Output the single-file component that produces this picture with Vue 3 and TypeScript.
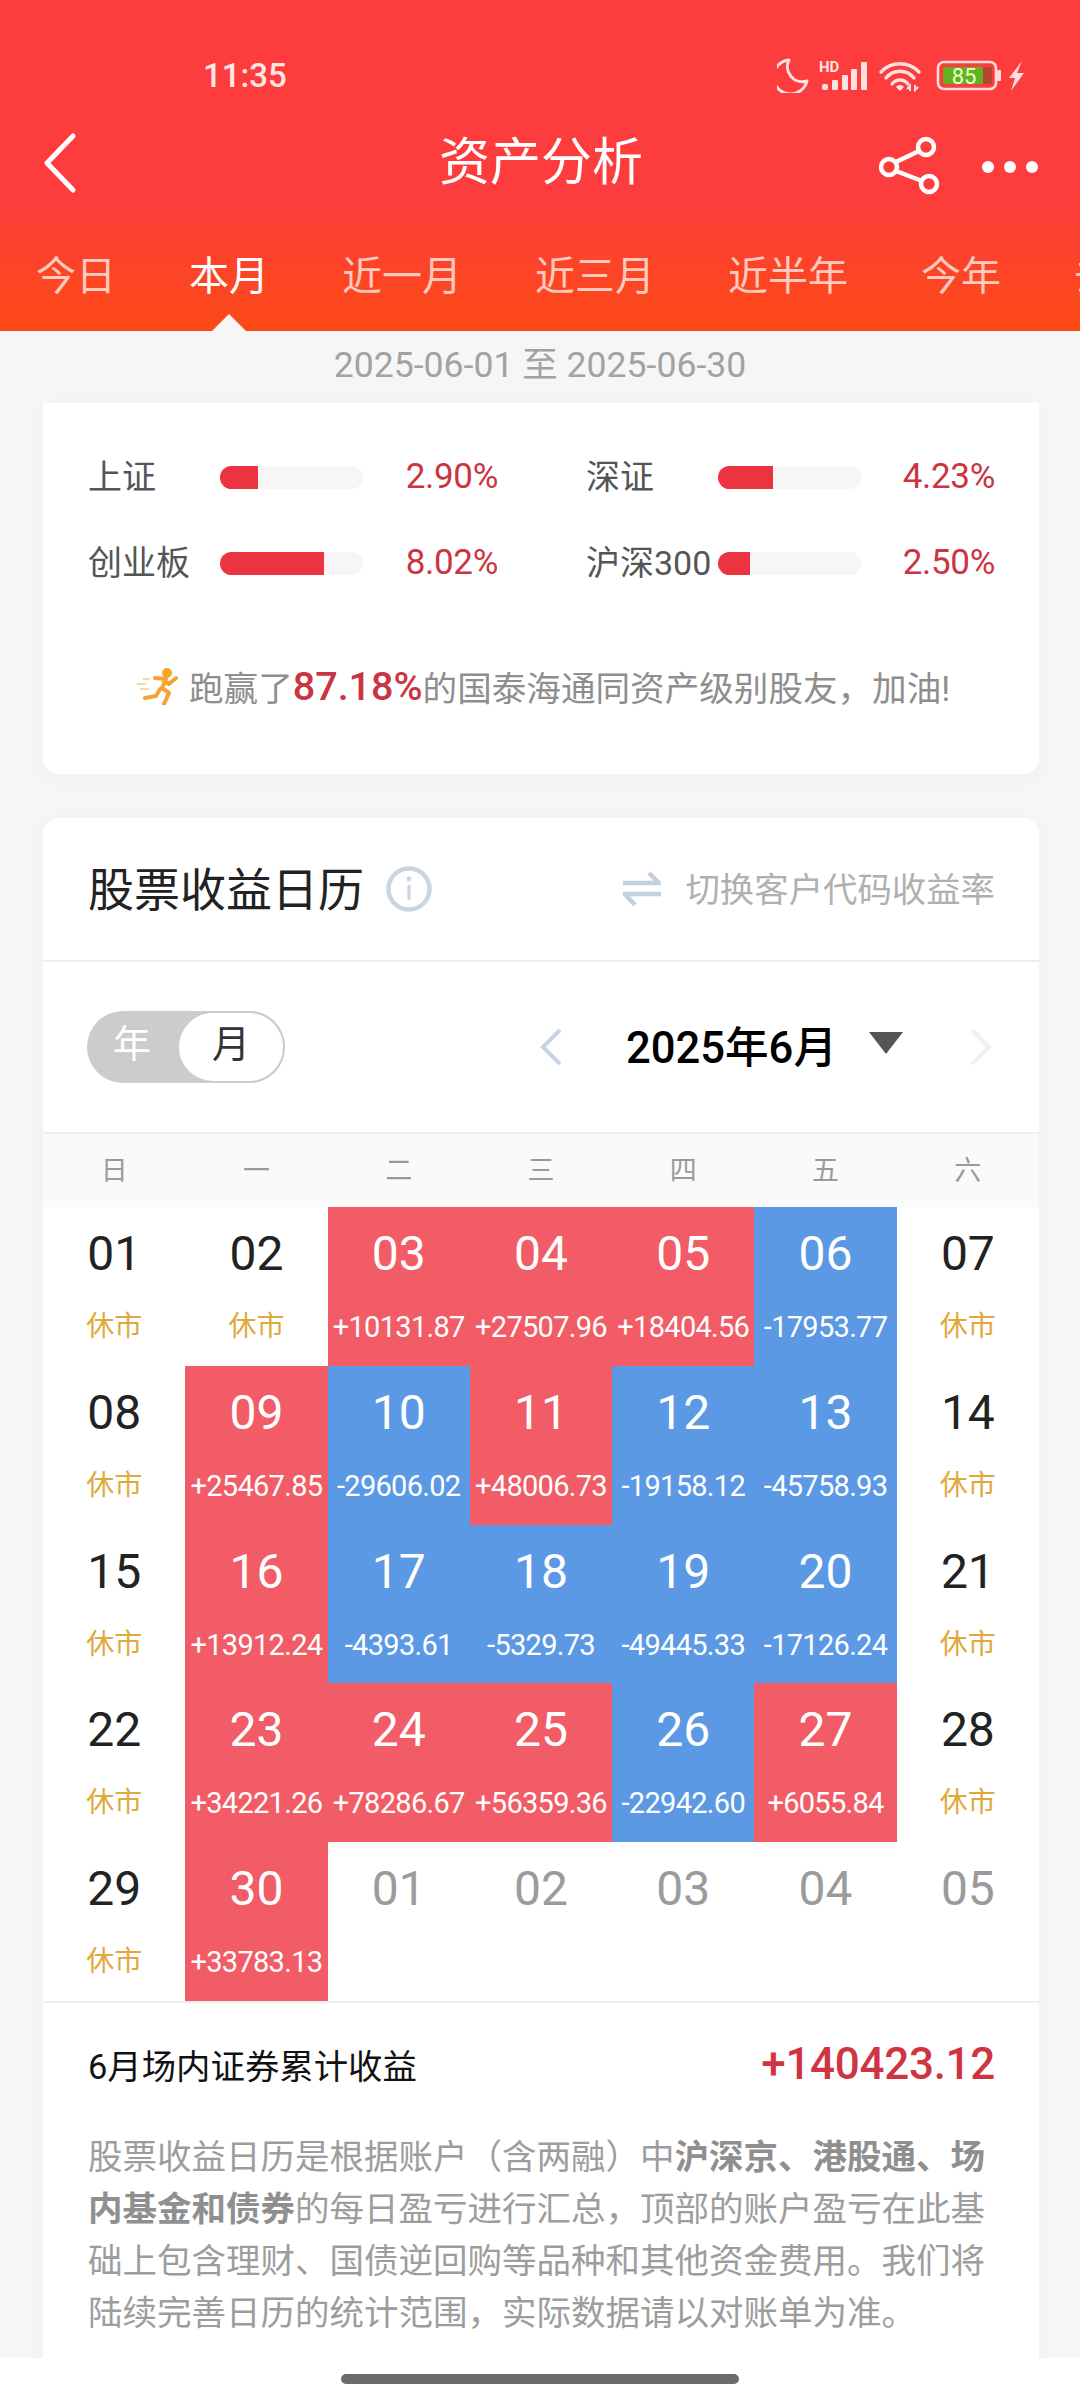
<template>
  <div class="page">
    <header class="top">
      <div class="status">
        <span class="time">11:35</span>
        <svg class="status-icons" viewBox="777 56 247 36" width="247" height="36">
          <path d="M789 59A17 17 0 1 0 807 80A15 15 0 0 1 789 59Z" fill="none" stroke="#ffe0e0" stroke-width="3" stroke-linejoin="round" />
          <text x="819" y="71" class="hd">HD</text>
          <g fill="#ffe0e0">
            <rect x="822" y="83" width="6" height="6" rx="2" />
            <rect x="832" y="79" width="6" height="10" rx="1" />
            <rect x="842" y="74" width="6" height="15" rx="1" />
            <rect x="851" y="68" width="6" height="21" rx="1" />
            <rect x="861" y="61" width="6" height="28" rx="1" />
          </g>
          <g fill="none" stroke="#ffe0e0" stroke-width="3.4" stroke-linecap="round">
            <path d="M881 71A26 26 0 0 1 919 71" />
            <path d="M886 77A18 18 0 0 1 914 77" />
            <path d="M892 83A10 10 0 0 1 908 83" />
          </g>
          <path d="M896 86L900 90L904 86A5 5 0 0 0 896 86Z" fill="#ffe0e0" />
          <path d="M910 90V85L907 88M915 84V89L918 86" fill="none" stroke="#ffe0e0" stroke-width="2" />
          <rect x="938" y="61" width="58" height="27" rx="6" fill="none" stroke="#ffdcdc" stroke-width="2.6" />
          <rect x="943" y="66" width="49" height="17" rx="1" fill="#b5452e" />
          <rect x="943" y="66" width="40" height="17" rx="1" fill="#62b21f" />
          <text x="964" y="83" class="batt">85</text>
          <rect x="997" y="69" width="4" height="11" rx="1" fill="#ffdcdc" />
          <path d="M1022 60L1009 77H1015L1011 90L1024 72H1017Z" fill="#ffdcdc" />
        </svg>
      </div>
      <div class="nav">
        <svg class="back" viewBox="0 0 36 62" width="36" height="62">
          <path d="M32 4L6 31L32 58" fill="none" stroke="#fff" stroke-width="5" stroke-linecap="round" stroke-linejoin="round" />
        </svg>
        <h1 class="title">资产分析</h1>
        <svg class="share" viewBox="878 135 62 62" width="62" height="62">
          <g fill="none" stroke="#fff" stroke-width="4.5">
            <circle cx="926" cy="147" r="8" />
            <circle cx="889" cy="167" r="8" />
            <circle cx="929" cy="184" r="8" />
            <path d="M896 162L919 151M896 171L922 181" />
          </g>
        </svg>
        <div class="dots"><i></i><i></i><i></i></div>
      </div>
      <div class="tabs">
        <span v-for="(t, i) in tabs" :key="t" class="tab" :class="{ active: i === 1 }">{{ t }}</span>
      </div>
    </header>

    <div class="range">2025-06-01 至 2025-06-30</div>

    <section class="card compare">
      <div class="stats">
        <div v-for="s in stats" :key="s.name" class="stat">
          <span class="stat-name">{{ s.name }}</span>
          <span class="bar"><span class="bar-fill" :style="{ width: s.fill + 'px' }"></span></span>
          <span class="stat-val">{{ s.value }}</span>
        </div>
      </div>
      <p class="beat">
        <svg class="runner" viewBox="0 0 42 38" width="42" height="38">
          <circle cx="31" cy="6" r="5" fill="#f5a623" />
          <path d="M19 11L30 12L26 21L33 26L28 37M27 13L33 17L40 11M24 22L20 29L9 31" fill="none" stroke="#f3a433" stroke-width="4" stroke-linejoin="round" stroke-linecap="round" />
          <path d="M1 17H10M4 22H13M7 12H14" fill="none" stroke="#f2c98c" stroke-width="1.6" />
        </svg>
        <span>跑赢了</span><b>87.18%</b><span>的国泰海通同资产级别股友，加油!</span>
      </p>
    </section>

    <section class="card calendar">
      <div class="cal-head">
        <div class="cal-title">
          <h2>股票收益日历</h2>
          <svg viewBox="0 0 46 46" width="46" height="46">
            <circle cx="23" cy="23" r="20.5" fill="none" stroke="#c8d6e4" stroke-width="4.5" />
            <circle cx="23" cy="13" r="2.4" fill="#c8d6e4" />
            <rect x="21.4" y="19" width="3.2" height="15" fill="#c8d6e4" />
          </svg>
        </div>
        <div class="switch">
          <svg viewBox="0 0 38 36" width="38" height="36">
            <path d="M0 12H36L26 2" fill="none" stroke="#c3d1de" stroke-width="4.5" />
            <path d="M38 23H2L12 34" fill="none" stroke="#c3d1de" stroke-width="4.5" />
          </svg>
          <span>切换客户代码收益率</span>
        </div>
      </div>

      <div class="controls">
        <div class="toggle">
          <span class="toggle-off">年</span>
          <span class="toggle-on">月</span>
        </div>
        <div class="month">
          <svg viewBox="0 0 22 38" width="22" height="38"><path d="M20 2L3 19L20 36" fill="none" stroke="#c6d4e4" stroke-width="4" /></svg>
          <span class="month-text">2025年6月</span>
          <span class="caret"></span>
          <svg viewBox="0 0 22 38" width="22" height="38"><path d="M2 2L19 19L2 36" fill="none" stroke="#eef1f5" stroke-width="4" /></svg>
        </div>
      </div>

      <div class="week">
        <span v-for="w in weekdays" :key="w">{{ w }}</span>
      </div>

      <div class="days">
        <div v-for="(d, i) in days" :key="i" class="day" :class="d.kind">
          <span class="num">{{ d.num }}</span>
          <span class="sub">{{ d.sub }}</span>
        </div>
      </div>

      <div class="summary">
        <span class="summary-name">6月场内证券累计收益</span>
        <span class="summary-val">+140423.12</span>
      </div>
      <p class="note">
        股票收益日历是根据账户（含两融）中<strong>沪深京、港股通、场内基金和债券</strong>的每日盈亏进行汇总，顶部的账户盈亏在此基础上包含理财、国债逆回购等品种和其他资金费用。我们将陆续完善日历的统计范围，实际数据请以对账单为准。
      </p>
    </section>

    <div class="home"><i></i></div>
  </div>
</template>

<script setup lang="ts">
type Day = { num: string; sub: string; kind: string };

const tabs = ['今日', '本月', '近一月', '近三月', '近半年', '今年', '去年'];
const weekdays = ['日', '一', '二', '三', '四', '五', '六'];

const stats = [
  { name: '上证', fill: 38, value: '2.90%' },
  { name: '深证', fill: 55, value: '4.23%' },
  { name: '创业板', fill: 104, value: '8.02%' },
  { name: '沪深300', fill: 32, value: '2.50%' },
];

const rest = (num: string): Day => ({ num, sub: '休市', kind: 'rest' });
const pl = (num: string, sub: string): Day => ({ num, sub, kind: sub[0] === '+' ? 'up' : 'down' });
const next = (num: string): Day => ({ num, sub: '', kind: 'next' });

const days: Day[] = [
  rest('01'), rest('02'), pl('03', '+10131.87'), pl('04', '+27507.96'), pl('05', '+18404.56'), pl('06', '-17953.77'), rest('07'),
  rest('08'), pl('09', '+25467.85'), pl('10', '-29606.02'), pl('11', '+48006.73'), pl('12', '-19158.12'), pl('13', '-45758.93'), rest('14'),
  rest('15'), pl('16', '+13912.24'), pl('17', '-4393.61'), pl('18', '-5329.73'), pl('19', '-49445.33'), pl('20', '-17126.24'), rest('21'),
  rest('22'), pl('23', '+34221.26'), pl('24', '+78286.67'), pl('25', '+56359.36'), pl('26', '-22942.60'), pl('27', '+6055.84'), rest('28'),
  rest('29'), pl('30', '+33783.13'), next('01'), next('02'), next('03'), next('04'), next('05'),
];
</script>

<style>
html,
body {
  margin: 0;
  background: #f6f6f6;
}
</style>

<style scoped>
.page {
  width: 1080px;
  height: 2400px;
  display: flex;
  flex-direction: column;
  overflow: hidden;
  background: #f6f6f6;
  font-family: Roboto, "Noto Sans CJK SC", sans-serif;
  color: #222;
}

.top {
  flex: none;
  height: 331px;
  color: #fff;
  background: linear-gradient(180deg, #fd3c3e 0, #fd3c3e 190px, #fc4a16 331px);
}

.status {
  height: 74px;
  padding: 38px 56px 0 203px;
  display: flex;
  align-items: center;
  justify-content: space-between;
}

.time {
  font-size: 33px;
  font-weight: 500;
  color: #ffe6e6;
}

.hd {
  font-size: 15px;
  font-weight: 700;
  fill: #ffe0e0;
}

.batt {
  font-size: 22px;
  fill: #e8ffd2;
  text-anchor: middle;
}

.nav {
  height: 102px;
  padding: 0 42px 0 41px;
  display: flex;
  align-items: center;
}

.title {
  flex: 1;
  margin: 0 0 0 362px;
  font-size: 51px;
  line-height: 60px;
  font-weight: 400;
}

.share {
  margin: 6px 42px 0 0;
}

.dots {
  display: flex;
  gap: 10px;
  padding-top: 8px;
}

.dots i {
  width: 12px;
  height: 12px;
  border-radius: 50%;
  background: #fff;
}

.tabs {
  display: flex;
  gap: 73px;
  padding: 40px 0 0 36px;
  overflow: hidden;
  height: 77px;
}

.tab {
  flex: none;
  position: relative;
  font-size: 40px;
  line-height: 46px;
  height: 77px;
  color: #ffc9bd;
}

.tab.active {
  color: #fff;
}

.tab.active::after {
  content: "";
  position: absolute;
  left: 50%;
  bottom: 0;
  margin-left: -17px;
  border-left: 17px solid transparent;
  border-right: 17px solid transparent;
  border-bottom: 17px solid #f6f6f6;
}

.range {
  flex: none;
  height: 72px;
  line-height: 68px;
  text-align: center;
  font-size: 35.6px;
  color: #a2a2a2;
}

.card {
  background: #fff;
  margin: 0 41px 0 43px;
  box-shadow: 0 4px 24px rgba(0, 0, 0, 0.03);
}

.compare {
  flex: none;
  height: 371px;
  box-sizing: border-box;
  padding: 51px 44px 0 45px;
  border-radius: 0 0 16px 16px;
}

.stats {
  display: grid;
  grid-template-columns: 410px 409px;
  column-gap: 88px;
  row-gap: 40px;
}

.stat {
  height: 46px;
  display: flex;
  align-items: center;
}

.stat-name {
  width: 132px;
  flex: none;
  padding-bottom: 5px;
  font-size: 34px;
  color: #555;
  white-space: nowrap;
}

.bar {
  width: 143px;
  height: 23px;
  flex: none;
  border-radius: 12px;
  overflow: hidden;
  background: #f6f6f6;
}

.bar-fill {
  display: block;
  height: 100%;
  background: #ec3340;
}

.stat-val {
  margin-left: auto;
  padding-bottom: 2px;
  font-size: 35px;
  letter-spacing: -0.3px;
  color: #cb3442;
}

.beat {
  margin: 75px 0 0;
  height: 50px;
  padding-left: 48px;
  display: flex;
  align-items: center;
  font-size: 34.6px;
  color: #8e8e8e;
  white-space: nowrap;
}

.beat b {
  font-size: 39.5px;
  font-weight: 500;
  color: #cb3442;
}

.runner {
  margin-right: 11px;
}

.calendar {
  flex: 1;
  min-height: 0;
  margin-top: 44px;
  overflow: hidden;
  border-radius: 16px 16px 0 0;
}

.cal-head {
  height: 142px;
  padding: 0 44px 0 45px;
  display: flex;
  align-items: center;
  justify-content: space-between;
  border-bottom: 2px solid #eeeeee;
}

.cal-title {
  display: flex;
  align-items: center;
  gap: 22px;
}

.cal-title h2 {
  margin: 0;
  padding-bottom: 6px;
  font-size: 46px;
  font-weight: 400;
  color: #222;
}

.switch {
  display: flex;
  align-items: center;
  gap: 24px;
  font-size: 34.4px;
  color: #b0b0b0;
}

.switch span {
  padding-bottom: 4px;
}

.controls {
  height: 170px;
  padding: 0 47px 0 44px;
  display: flex;
  align-items: center;
  justify-content: space-between;
  border-bottom: 2px solid #f0f0f0;
}

.toggle {
  width: 198px;
  height: 72px;
  display: flex;
  background: #cccccc;
  border-radius: 36px;
}

.toggle-off {
  width: 90px;
  line-height: 66px;
  text-align: center;
  font-size: 38px;
  color: #fff;
}

.toggle-on {
  width: 108px;
  box-sizing: border-box;
  border: 2px solid #cccccc;
  border-radius: 36px;
  background: #fff;
  line-height: 62px;
  text-align: center;
  font-size: 38px;
  color: #333;
}

.month {
  display: flex;
  align-items: center;
}

.month-text {
  margin: 0 32px 0 64px;
  padding-bottom: 6px;
  font-size: 43.6px;
  font-weight: 500;
  color: #000;
  white-space: nowrap;
}

.caret {
  margin: -8px 67px 0 0;
  border-left: 17px solid transparent;
  border-right: 17px solid transparent;
  border-top: 22px solid #555;
}

.week {
  height: 73px;
  box-sizing: border-box;
  padding-bottom: 4px;
  display: grid;
  grid-template-columns: repeat(7, 1fr);
  align-items: center;
  text-align: center;
  font-size: 27px;
  color: #9a9a9a;
  background: #fafafa;
}

.days {
  display: grid;
  grid-template-columns: repeat(7, 1fr);
  grid-auto-rows: 158.8px;
  border-bottom: 2px solid #eeeeee;
}

.day {
  display: flex;
  flex-direction: column;
  align-items: center;
  min-width: 0;
  white-space: nowrap;
}

.num {
  height: 56px;
  margin-top: 19px;
  font-size: 48px;
  line-height: 56px;
  color: #222;
}

.sub {
  margin-top: 28px;
  height: 34px;
  line-height: 34px;
  font-size: 29px;
  letter-spacing: -0.7px;
}

.rest .sub {
  font-size: 28px;
  letter-spacing: 0;
  color: #e0a93b;
}

.up {
  background: #f25c66;
}

.down {
  background: #5b99e5;
}

.up .num,
.up .sub,
.down .num,
.down .sub {
  color: #fff;
}

.next .num {
  color: #9b9b9b;
}

.summary {
  margin-top: 31px;
  height: 60px;
  padding: 0 44px 0 45px;
  display: flex;
  align-items: center;
  justify-content: space-between;
}

.summary-name {
  font-size: 34.4px;
  color: #111;
}

.summary-val {
  font-size: 44px;
  font-weight: 500;
  letter-spacing: -0.3px;
  color: #cf3442;
}

.note {
  width: 905px;
  margin: 37px 0 0 45px;
  font-size: 34.5px;
  line-height: 52px;
  color: #9d9d9d;
}

.note strong {
  font-weight: 700;
  color: #8f8f8f;
}

.home {
  flex: none;
  height: 42px;
  box-sizing: border-box;
  padding-top: 16px;
  background: #fff;
  display: flex;
  justify-content: center;
}

.home i {
  width: 398px;
  height: 10px;
  border-radius: 5px;
  background: #6b6b6b;
}
</style>
